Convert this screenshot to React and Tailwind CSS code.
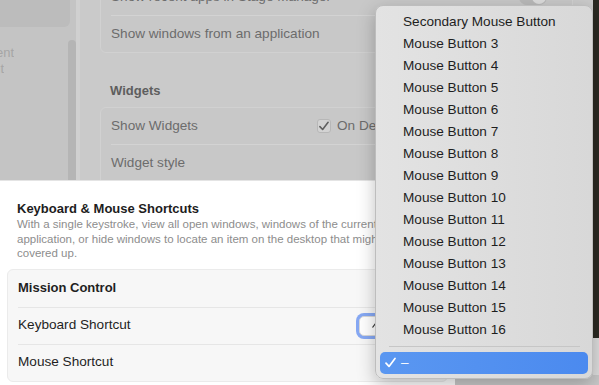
import React from "react";

const buttons = [
  "Secondary Mouse Button",
  "Mouse Button 3",
  "Mouse Button 4",
  "Mouse Button 5",
  "Mouse Button 6",
  "Mouse Button 7",
  "Mouse Button 8",
  "Mouse Button 9",
  "Mouse Button 10",
  "Mouse Button 11",
  "Mouse Button 12",
  "Mouse Button 13",
  "Mouse Button 14",
  "Mouse Button 15",
  "Mouse Button 16",
];

function Check({ className, color }) {
  return (
    <svg viewBox="0 0 11 11" className={className} fill="none">
      <path d="M1 6.2 L4 9.4 L10 1.4" stroke={color} strokeWidth="1.7" strokeLinecap="round" strokeLinejoin="round" />
    </svg>
  );
}

function DimCheckbox({ label }) {
  return (
    <div className="flex items-center gap-[6px]">
      <span className="flex h-[14px] w-[14px] items-center justify-center rounded-[3px] border border-[#b7b7b7] bg-[#d3d3d3]">
        <Check className="h-[10px] w-[10px]" color="#5f5f5f" />
      </span>
      <span className="whitespace-nowrap">{label}</span>
    </div>
  );
}

function Toggle() {
  return (
    <div className="flex h-[16px] w-[28px] items-center justify-end rounded-full bg-[#b9b9b9] px-[1px]">
      <span className="h-[14px] w-[14px] rounded-full bg-[#dcdcdc]" />
    </div>
  );
}

function DimWindow() {
  return (
    <div className="flex h-full w-[593px]">
      <aside className="flex w-[76px] flex-col bg-[#c4c4c4]">
        <div className="h-[27px] w-[70px] rounded-br-[6px] bg-[#bcbcbc]" />
        <div className="flex flex-1">
          <div className="w-[68px] pt-[18px] text-[13px] leading-[16px] text-[#a6a6a6]">
            <div className="flex w-[14px] justify-end overflow-hidden whitespace-nowrap">Management</div>
            <div className="flex w-[4px] justify-end overflow-hidden whitespace-nowrap">Shortcut</div>
          </div>
          <div className="mt-[13px] w-[8px] rounded-t-full bg-[#b5b5b5]" />
        </div>
      </aside>
      <div className="w-[4px] bg-[#d0d0d0]" />
      <main className="flex-1 bg-[#cacaca] px-[20px] text-[13.6px] text-[#6c6c6c]">
        <div className="-mt-[22px] rounded-[6px] border border-[#d1d1d1] bg-[#c8c8c8]">
          <div className="flex h-[36px] items-center justify-between px-[10px]">
            <span>Show recent apps in Stage Manager</span>
            <div className="mr-[15px]">
              <Toggle />
            </div>
          </div>
          <div className="mx-[10px] h-px bg-[#d3d3d3]" />
          <div className="flex h-[36px] items-center px-[10px]">
            <span>Show windows from an application</span>
          </div>
        </div>
        <div className="mt-[27px] flex h-[22px] items-center pl-[10px] text-[13px] font-bold text-[#5e5e5e]">
          Widgets
        </div>
        <div className="mt-[5px] rounded-[6px] border border-[#d1d1d1] bg-[#c8c8c8]">
          <div className="flex h-[36px] items-center px-[10px]">
            <span className="w-[206px]">Show Widgets</span>
            <div className="flex items-center gap-[16px]">
              <DimCheckbox label="On Desktop" />
              <DimCheckbox label="In Stage Manager" />
            </div>
          </div>
          <div className="mx-[10px] h-px bg-[#d3d3d3]" />
          <div className="flex h-[36px] items-center px-[10px]">
            <span>Widget style</span>
          </div>
          <div className="mx-[10px] h-px bg-[#d3d3d3]" />
          <div className="flex h-[36px] items-center px-[10px]">
            <span>Use iPhone widgets</span>
          </div>
        </div>
      </main>
    </div>
  );
}

function Sheet() {
  return (
    <div className="absolute left-0 top-[180px] h-[215px] w-[455px] border-t border-[#e4e4e4] bg-white px-[7px] pt-[19px]">
      <h2 className="pl-[10px] text-[13px] font-bold leading-[17px] text-[#1d1d1d]">Keyboard &amp; Mouse Shortcuts</h2>
      <p className="whitespace-nowrap pl-[10px] text-[11.5px] leading-[14.5px] text-[#8d8d8d]">
        With a single keystroke, view all open windows, windows of the current
        <br />
        application, or hide windows to locate an item on the desktop that might be
        <br />
        covered up.
      </p>
      <div className="mt-[8px] rounded-[6px] border border-[#ebebeb] bg-[#f7f7f7] text-[13.6px] text-[#1f1f1f]">
        <div className="flex h-[37px] items-center px-[10px] text-[13px] font-bold">Mission Control</div>
        <div className="mx-[10px] h-px bg-[#e6e6e6]" />
        <div className="flex h-[36px] items-center justify-between px-[10px]">
          <span>Keyboard Shortcut</span>
          <div className="flex h-[20px] w-[78px] items-center rounded-[5px] border border-[#d9d9d9] bg-white pl-[12px] ring-3 ring-[#86a8f3]">
            <svg viewBox="0 0 4 5" className="h-[5px] w-[4px]">
              <path d="M0.5 4.5 L3.5 0.5" stroke="#333" strokeWidth="1.2" />
            </svg>
          </div>
        </div>
        <div className="mx-[10px] h-px bg-[#e6e6e6]" />
        <div className="flex h-[36px] items-center justify-between px-[10px]">
          <span>Mouse Shortcut</span>
        </div>
      </div>
    </div>
  );
}

function Menu() {
  return (
    <div className="absolute left-[375px] top-[5px] w-[218px] rounded-[8px] border border-[#bdbdbd] bg-gradient-to-r from-[#e3e3e3] to-[#d8d8d8] pb-[4px] pt-[5px] text-[13.6px] text-[#1e1e1e] shadow-[0_6px_18px_rgba(0,0,0,0.25)]">
      {buttons.map((b) => (
        <div key={b} className="flex h-[22px] items-center pl-[27px]">
          {b}
        </div>
      ))}
      <div className="py-[5px]">
        <div className="ml-[13px] mr-[12px] h-px bg-[#c6c6c6]" />
      </div>
      <div className="mx-[4px] flex h-[21.5px] items-center rounded-[5px] bg-gradient-to-r from-[#5a97f1] to-[#4b8aef] pl-[5px] text-white">
        <Check className="h-[11px] w-[11px]" color="#ffffff" />
        <span className="ml-[5px]">–</span>
      </div>
    </div>
  );
}

export default function App() {
  return (
    <div className="relative h-[385px] w-[599px] overflow-hidden bg-[#c9c9c9] font-['Liberation_Sans',sans-serif]">
      <div className="flex h-full">
        <DimWindow />
        <div className="flex w-[6px] flex-col">
          <div className="h-[338px] bg-[#2b2a23]" />
          <div className="h-[37px] bg-[#dedede]" />
          <div className="flex-1 bg-[#c9c9c9]" />
        </div>
      </div>
      <Sheet />
      <Menu />
    </div>
  );
}
